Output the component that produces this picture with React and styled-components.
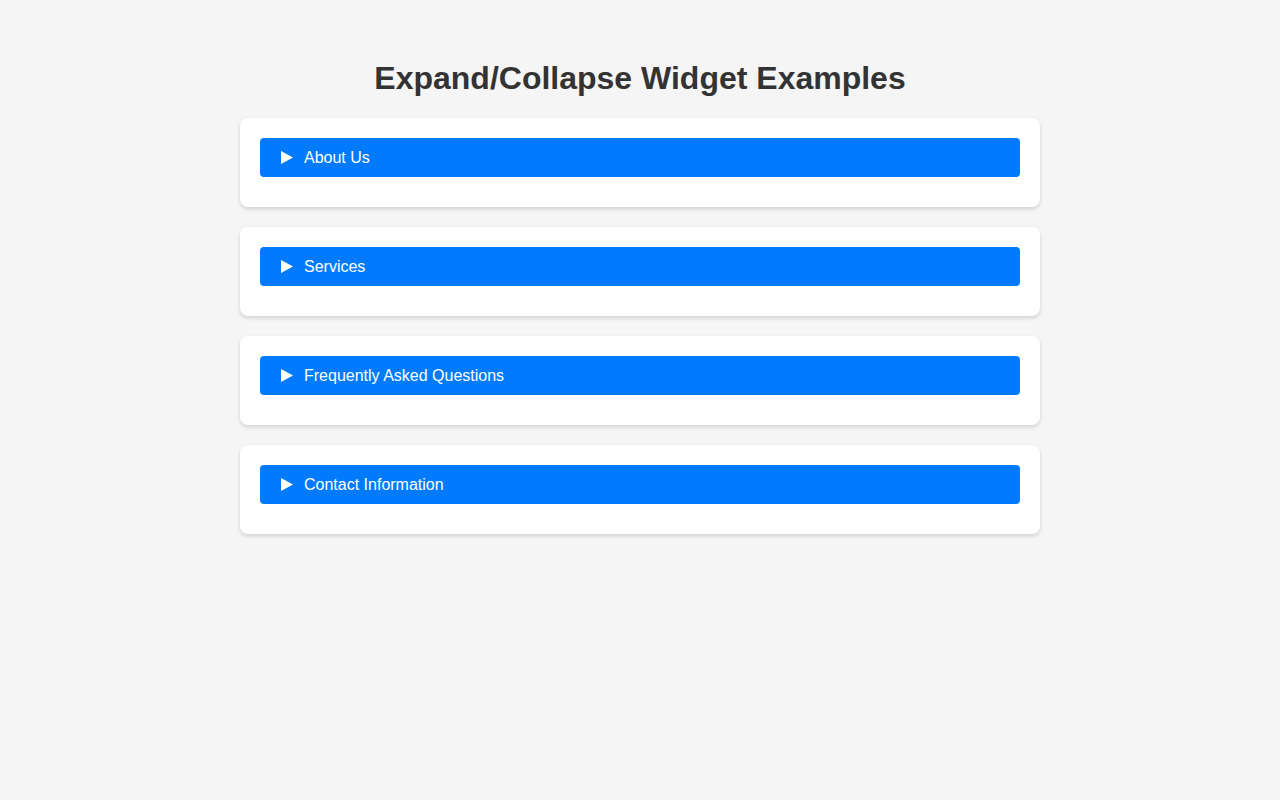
import React from "react";
import styled, { createGlobalStyle } from "styled-components";

const Global = createGlobalStyle`
  html, body { margin: 0; padding: 0; background: #f5f5f5; }
  body { font-family: "Liberation Sans", Arial, sans-serif; color: #333; }
`;

const Page = styled.div`
  max-width: 800px;
  margin: 0 auto;
  padding: 60px 0 20px;
`;

const Title = styled.h1`
  font-size: 32px;
  font-weight: bold;
  text-align: center;
  color: #333;
  margin: 0 0 21px;
  line-height: 37px;
`;

const List = styled.div`
  display: flex;
  flex-direction: column;
  gap: 20px;
`;

const Card = styled.details`
  background: #fff;
  border-radius: 8px;
  box-shadow: 0 2px 4px rgba(0, 0, 0, 0.15);
  padding: 20px 20px 30px;
`;

const Summary = styled.summary`
  display: flex;
  align-items: center;
  gap: 11px;
  background: #007bff;
  color: #fff;
  border-radius: 4px;
  padding: 10px 21px;
  font-size: 16px;
  line-height: 19px;
  cursor: pointer;
  list-style: none;
  &::-webkit-details-marker { display: none; }
`;

const Arrow = styled.svg`
  width: 12px;
  height: 13px;
  flex: none;
`;

const items = ["About Us", "Services", "Frequently Asked Questions", "Contact Information"];

export default function App() {
  return (
    <>
      <Global />
      <Page>
        <Title>Expand/Collapse Widget Examples</Title>
        <List>
          {items.map((t) => (
            <Card key={t}>
              <Summary>
                <Arrow viewBox="0 0 12 13">
                  <path d="M0 0 L12 6.5 L0 13 Z" fill="#fff" />
                </Arrow>
                {t}
              </Summary>
            </Card>
          ))}
        </List>
      </Page>
    </>
  );
}
